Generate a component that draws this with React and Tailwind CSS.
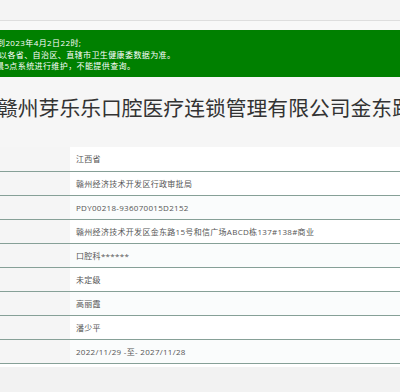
const NOTICE = [
  { text: "到2023年4月2日22时;", shift: "-ml-[3px]" },
  { text: "以各省、自治区、直辖市卫生健康委数据为准。", shift: "-ml-[1px]" },
  { text: "晨5点系统进行维护，不能提供查询。", shift: "-ml-[4px]" },
];

const ROWS = [
  "江西省",
  "赣州经济技术开发区行政审批局",
  "PDY00218-936070015D2152",
  "赣州经济技术开发区金东路15号和信广场ABCD栋137#138#商业",
  "口腔科******",
  "未定级",
  "高丽霞",
  "潘少平",
  "2022/11/29 -至- 2027/11/28",
];

const FONT = { fontFamily: '"Open Sans", "Noto Sans CJK SC", sans-serif' };

export default function App() {
  return (
    <div className="w-[400px] h-[392px] overflow-hidden bg-[#f2f2f2]" style={FONT}>
      {/* top bar */}
      <div className="h-[21px] bg-[#f4f4f4] border-b border-[#dedede]" />
      <div className="h-[9px] bg-[#f8f8f8]" />

      {/* notice */}
      <div className="h-[47px] bg-[#008000] pt-[7px] overflow-hidden">
        {NOTICE.map((l) => (
          <div key={l.text} className={`${l.shift} h-[11.5px] leading-[11.5px] text-[8px] tracking-[0.4px] text-white whitespace-nowrap`}>
            {l.text}
          </div>
        ))}
      </div>

      {/* title */}
      <div className="h-[70px] bg-[#f6f6f6] pt-[20px] overflow-hidden">
        <div className="-ml-[3px] whitespace-nowrap text-[20.8px] leading-[22px] text-[#333]">
          赣州芽乐乐口腔医疗连锁管理有限公司金东路
        </div>
      </div>

      {/* info table */}
      <div className="bg-white pb-[3px]">
        {ROWS.map((v, i) => (
          <div key={v}
            className={`flex border-b border-[#86a097] ${i === 0 ? "h-[25px]" : "h-[24px]"}`}>
            <div className="w-[70px] shrink-0 bg-[#f5f5f5]" />
            <div className={`flex-1 flex items-center pl-[6px] text-[8px] tracking-[0.3px] text-[#555] whitespace-nowrap
              ${i % 2 === 0 && i > 0 ? "bg-[#fafcfc]" : "bg-white"}`}>
              {v}
            </div>
          </div>
        ))}
      </div>
    </div>
  );
}
